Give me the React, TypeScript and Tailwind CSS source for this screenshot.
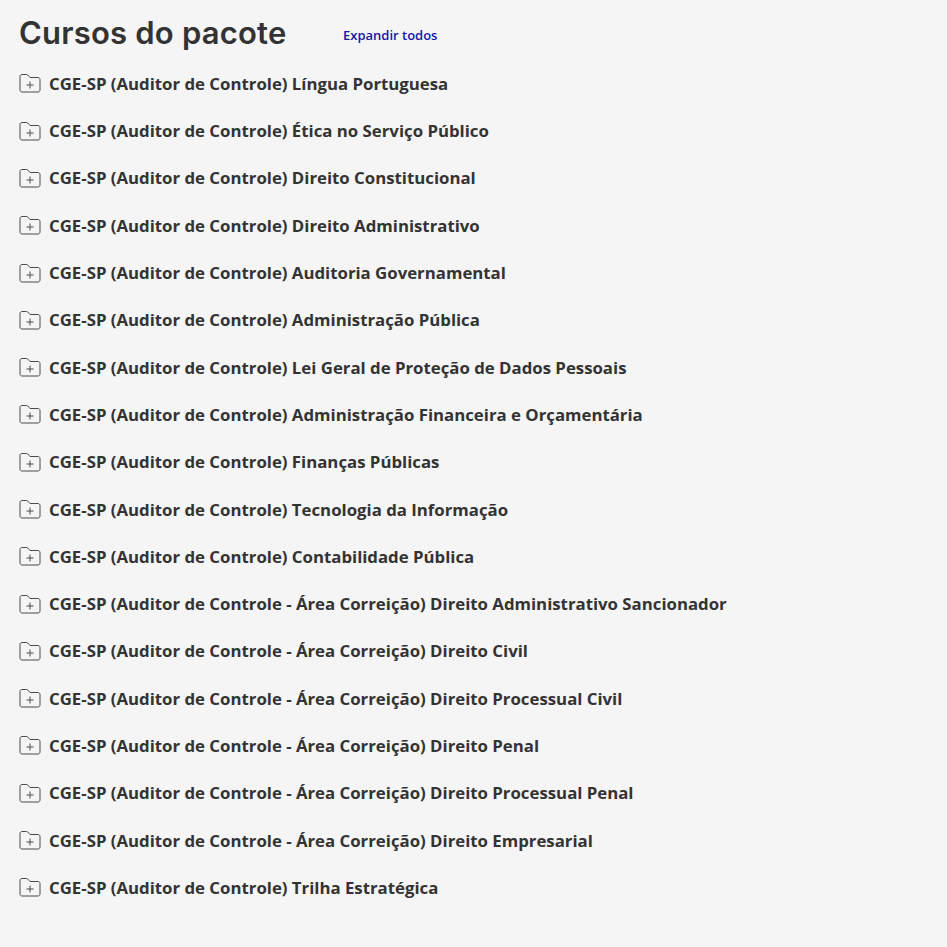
const courses = [
  'CGE-SP (Auditor de Controle) Língua Portuguesa',
  'CGE-SP (Auditor de Controle) Ética no Serviço Público',
  'CGE-SP (Auditor de Controle) Direito Constitucional',
  'CGE-SP (Auditor de Controle) Direito Administrativo',
  'CGE-SP (Auditor de Controle) Auditoria Governamental',
  'CGE-SP (Auditor de Controle) Administração Pública',
  'CGE-SP (Auditor de Controle) Lei Geral de Proteção de Dados Pessoais',
  'CGE-SP (Auditor de Controle) Administração Financeira e Orçamentária',
  'CGE-SP (Auditor de Controle) Finanças Públicas',
  'CGE-SP (Auditor de Controle) Tecnologia da Informação',
  'CGE-SP (Auditor de Controle) Contabilidade Pública',
  'CGE-SP (Auditor de Controle - Área Correição) Direito Administrativo Sancionador',
  'CGE-SP (Auditor de Controle - Área Correição) Direito Civil',
  'CGE-SP (Auditor de Controle - Área Correição) Direito Processual Civil',
  'CGE-SP (Auditor de Controle - Área Correição) Direito Penal',
  'CGE-SP (Auditor de Controle - Área Correição) Direito Processual Penal',
  'CGE-SP (Auditor de Controle - Área Correição) Direito Empresarial',
  'CGE-SP (Auditor de Controle) Trilha Estratégica',
];

function FolderPlus() {
  return (
    <svg width="22" height="19" viewBox="0 0 22 19" fill="none" stroke="#4a4a4a" strokeWidth="1" className="shrink-0">
      <path d="M1 16V2.5C1 1.4 1.9 .5 3 .5H7.5C8.1 .5 8.5 .7 8.9 1.1L11 3.5H19C20.1 3.5 21 4.4 21 5.5V16C21 17.1 20.1 18 19 18H3C1.9 18 1 17.1 1 16Z" />
      <path d="M11 7.5V14.5M7.5 11H14.5" />
    </svg>
  );
}

export default function App() {
  return (
    <div className="min-h-[947px] bg-[#f5f5f5] pl-[19px] pr-5 pt-[12px] font-['Open_Sans',sans-serif] text-[#333]">
      <div className="flex items-center h-[42px]">
        <h2 className="w-[324px] font-['Inter',sans-serif] text-[31px] font-semibold leading-[42px] tracking-[0.2px]">Cursos do pacote</h2>
        <button className="text-[13px] font-semibold leading-[18px] text-[#1515a6] mt-[3px]">Expandir todos</button>
      </div>
      <ul className="mt-[6.2px]">
        {courses.map((name) => (
          <li key={name} className="flex h-[47.3px] items-center gap-[8px]">
            <FolderPlus />
            <span className="text-[16.8px] font-bold leading-[24px]">{name}</span>
          </li>
        ))}
      </ul>
    </div>
  );
}
